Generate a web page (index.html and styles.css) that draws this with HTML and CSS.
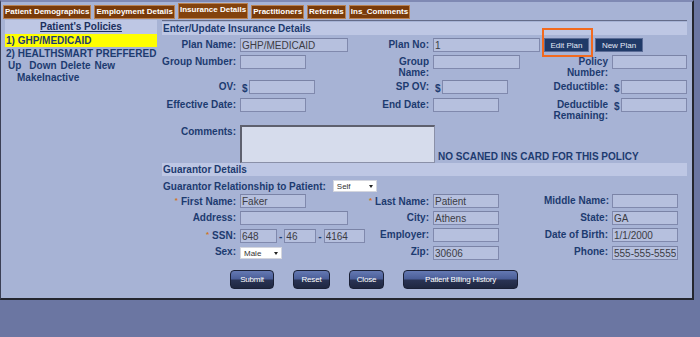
FILE: index.html
```html
<!DOCTYPE html>
<html lang="en">
<head>
    <meta charset="UTF-8">
    <meta name="viewport" content="width=device-width, initial-scale=1.0">
    <title>Insurance Details</title>
    <link rel="stylesheet" href="styles.css">
</head>
<body>

<div class="frame">
    <ul class="tabs">
        <li>Patient Demographics</li>
        <li>Employment Details</li>
        <li class="active">Insurance Details</li>
        <li>Practitioners</li>
        <li>Referrals</li>
        <li>Ins_Comments</li>
    </ul>

    <div class="main">
        <div class="policies">
            <div class="policies-head"><span>Patient's Policies</span></div>
            <div class="policy selected">1) GHP/MEDICAID</div>
            <div class="policy">2) HEALTHSMART PREFFERED</div>
            <div class="policy-links">
                <a class="up">Up</a><a>Down</a><a>Delete</a><a>New</a>
            </div>
            <div class="policy-links second"><a>MakeInactive</a></div>
        </div>

        <div class="details">
            <div class="band">Enter/Update Insurance Details</div>

            <div class="grid ins">
                <label>Plan Name:</label>
                <div class="cell"><input class="field w108" value="GHP/MEDICAID"></div>
                <label>Plan No:</label>
                <div class="cell"><input class="field w107" value="1"></div>
                <div class="cell plan-btns">
                    <button class="plan-btn edit">Edit Plan</button>
                    <button class="plan-btn new">New Plan</button>
                    <span class="highlight"></span>
                </div>

                <label>Group Number:</label>
                <div class="cell"><input class="field w66"></div>
                <label>Group<br>Name:</label>
                <div class="cell"><input class="field w87"></div>
                <label>Policy<br>Number:</label>
                <div class="cell"><input class="field w75"></div>

                <label>OV:</label>
                <div class="cell"><span class="cur">$</span><input class="field w66"></div>
                <label>SP OV:</label>
                <div class="cell"><span class="cur">$</span><input class="field w66"></div>
                <label>Deductible:</label>
                <div class="cell"><span class="cur">$</span><input class="field w66"></div>

                <label>Effective Date:</label>
                <div class="cell"><input class="field w66"></div>
                <label>End Date:</label>
                <div class="cell"><input class="field w66"></div>
                <label>Deductible<br>Remaining:</label>
                <div class="cell"><span class="cur">$</span><input class="field w66"></div>

                <label class="pad">Comments:</label>
                <div class="cell comments">
                    <textarea class="notes"></textarea>
                    <span class="no-card">NO SCANED INS CARD FOR THIS POLICY</span>
                </div>
            </div>

            <div class="band">Guarantor Details</div>

            <div class="rel">
                <span>Guarantor Relationship to Patient:</span>
                <span class="select w44">Self<i></i></span>
            </div>

            <div class="grid guar">
                <label><span class="req">*</span>First Name:</label>
                <div class="cell"><input class="field w66" value="Faker"></div>
                <label><span class="req">*</span>Last Name:</label>
                <div class="cell"><input class="field w66" value="Patient"></div>
                <label>Middle Name:</label>
                <div class="cell"><input class="field w66"></div>

                <label>Address:</label>
                <div class="cell"><input class="field w108"></div>
                <label>City:</label>
                <div class="cell"><input class="field w66" value="Athens"></div>
                <label>State:</label>
                <div class="cell"><input class="field w66" value="GA"></div>

                <label><span class="req">*</span>SSN:</label>
                <div class="cell ssn">
                    <input class="field w37" value="648"><span class="dash">-</span><input class="field w32" value="46"><span class="dash">-</span><input class="field w41" value="4164">
                </div>
                <label>Employer:</label>
                <div class="cell"><input class="field w66"></div>
                <label>Date of Birth:</label>
                <div class="cell"><input class="field w66" value="1/1/2000"></div>

                <label>Sex:</label>
                <div class="cell"><span class="select w42 low">Male<i></i></span></div>
                <label>Zip:</label>
                <div class="cell"><input class="field w66" value="30606"></div>
                <label>Phone:</label>
                <div class="cell"><input class="field w66" value="555-555-5555"></div>
            </div>

            <div class="actions">
                <button class="btn submit">Submit</button>
                <button class="btn reset">Reset</button>
                <button class="btn close">Close</button>
                <button class="btn history">Patient Billing History</button>
            </div>
        </div>
    </div>
</div>

</body>
</html>
```

FILE: styles.css
```css
body {
    margin: 0;
    background-color: #6b76a2;
    font-family: "Liberation Sans", Arial, sans-serif;
    font-size: 10px;
    color: #1d3b70;
}
.frame {
    width: 694px;
    box-sizing: border-box;
    background-color: #a7b3d5;
    border-top: 2px solid #7f89b3;
    border-left: 1px solid #3b3f55;
    border-right: 2px solid #24262f;
    border-bottom: 2px solid #24262f;
    padding-bottom: 9px;
}

/* tabs */
.tabs {
    display: flex;
    align-items: flex-end;
    gap: 3px;
    height: 16px;
    margin: 1px 0 1px 2px;
    padding: 0;
    list-style: none;
}
.tabs li {
    height: 14px;
    box-sizing: border-box;
    padding: 0 1px;
    background-color: #7a3b0a;
    border: 1px solid #b98150;
    color: #fff;
    font-size: 8px;
    font-weight: bold;
    line-height: 12px;
    white-space: nowrap;
}
.tabs li.active {
    height: 16px;
    background-color: #83420d;
    line-height: 11px;
}

.main {
    display: flex;
    gap: 5px;
    padding: 0 5px 0 4px;
}

/* policies list */
.policies {
    width: 152px;
    flex: none;
    font-weight: bold;
}
.policies-head {
    height: 14px;
    line-height: 14px;
    background-color: #bec7e4;
    text-align: center;
    color: #1b2f5e;
}
.policies-head span {
    text-decoration: underline;
}
.policy {
    line-height: 13px;
    padding-left: 1px;
    white-space: nowrap;
}
.policy.selected {
    background-color: #ffff00;
}
.policy-links {
    display: flex;
    gap: 4px;
    padding-left: 3px;
    line-height: 12px;
}
.policy-links .up {
    margin-right: 4px;
}
.policy-links.second {
    padding-left: 12px;
}

/* details */
.details {
    width: 525px;
    flex: none;
    border-top: 1px solid #646c8a;
    padding-top: 1px;
}
.band {
    height: 13px;
    line-height: 13px;
    background-color: #bec7e4;
    font-weight: bold;
    padding-left: 1px;
}
.grid {
    display: grid;
    grid-template-columns: 74px 115px 70px 107px 64px 75px;
    column-gap: 4px;
}
.ins {
    grid-template-rows: 17px 25px 18px 25px 40px;
    margin-top: 3px;
}
.guar {
    grid-template-rows: repeat(4, 17px);
}
.grid label {
    text-align: right;
    font-weight: bold;
    line-height: 11px;
    padding-top: 1px;
    white-space: nowrap;
}
.grid label.pad {
    padding-top: 3px;
}
.cell {
    display: flex;
    align-items: flex-start;
}
.field {
    height: 14px;
    box-sizing: border-box;
    margin: 0;
    padding: 0 1px;
    border: 1px solid #8089ad;
    border-top-color: #7a83a6;
    background-color: #b6c0de;
    font-family: "Liberation Sans", Arial, sans-serif;
    font-size: 10px;
    color: #3c3c44;
}
.w32 { width: 32px; }
.w37 { width: 37px; }
.w41 { width: 41px; }
.w42 { width: 42px; }
.w44 { width: 44px; }
.w66 { width: 66px; }
.w75 { width: 75px; }
.w87 { width: 87px; }
.w107 { width: 107px; }
.w108 { width: 108px; }

.cur {
    font-weight: bold;
    padding: 3px 1px 0 2px;
    line-height: 11px;
}

.plan-btns {
    grid-column: span 2;
    position: relative;
    gap: 6px;
}
.plan-btn {
    height: 14px;
    margin: 0;
    padding: 0;
    background-color: #203a68;
    border: 1px solid #5b6c96;
    color: #e3e9f6;
    font-family: "Liberation Sans", Arial, sans-serif;
    font-size: 8px;
}
.plan-btn.edit { width: 45px; }
.plan-btn.new { width: 48px; }
.highlight {
    position: absolute;
    left: -2px;
    top: -10px;
    width: 51px;
    height: 29px;
    box-sizing: border-box;
    border: 2px solid #f26a1e;
}

.comments {
    grid-column: 2 / span 5;
    align-items: flex-end;
    gap: 3px;
}
.notes {
    width: 195px;
    height: 38px;
    box-sizing: border-box;
    margin: 0;
    padding: 1px;
    border: 1px solid #8a90a8;
    border-top: 2px solid #5e606e;
    border-left: 2px solid #5e606e;
    background-color: #d6dcec;
    resize: none;
    overflow-y: scroll;
}
.notes::-webkit-scrollbar {
    width: 9px;
}
.notes::-webkit-scrollbar-track {
    background-color: #f1f1ee;
}
.no-card {
    font-weight: bold;
    line-height: 11px;
    margin-bottom: 1px;
    white-space: nowrap;
}

.rel {
    display: flex;
    align-items: center;
    gap: 7px;
    height: 16px;
    margin-top: 2px;
    padding-left: 1px;
    font-weight: bold;
}
.select {
    display: flex;
    justify-content: space-between;
    align-items: center;
    height: 12px;
    box-sizing: border-box;
    padding: 0 3px;
    background-color: #fff;
    border: 1px solid #d4d6de;
    color: #333;
    font-size: 8px;
    font-weight: normal;
}
.select i {
    border-left: 2px solid transparent;
    border-right: 2px solid transparent;
    border-top: 3px solid #222;
}
.select.low {
    margin-top: 2px;
}
.req {
    color: #d2731e;
    font-size: 8px;
    vertical-align: 2px;
    margin-right: 3px;
}
.ssn {
    gap: 2px;
}
.ssn .field {
    margin-top: 1px;
}
.dash {
    width: 5px;
    padding-top: 3px;
    text-align: center;
    font-weight: bold;
    line-height: 11px;
}
.guar .cell .field {
    margin-top: 0;
}
.guar .ssn .field,
.guar .cell:nth-child(n+19) .field {
    margin-top: 1px;
}

/* bottom buttons */
.actions {
    display: flex;
    gap: 19px;
    padding-left: 68px;
    margin-top: 8px;
}
.btn {
    height: 19px;
    margin: 0;
    padding: 0;
    border: 1px solid #1a2036;
    border-radius: 4px;
    background: linear-gradient(#6479b3 0%, #4a5d97 48%, #2a3455 52%, #1f2741 100%);
    color: #fff;
    font-family: "Liberation Sans", Arial, sans-serif;
    font-size: 8px;
    letter-spacing: -0.2px;
}
.btn.submit { width: 44px; }
.btn.reset { width: 37px; }
.btn.close { width: 35px; }
.btn.history { width: 115px; }
```
